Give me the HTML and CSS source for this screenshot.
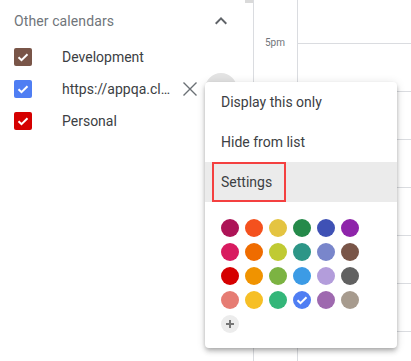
FILE: index.html
```html
<!DOCTYPE html>
<html lang="en">
<head>
  <meta charset="UTF-8">
  <title>Other calendars</title>
  <link rel="stylesheet" href="styles.css">
</head>
<body>

<div class="page">
  <div class="sidebar">
    <div class="scroll-thumb"></div>
    <div class="section-header">
      <span class="section-title">Other calendars</span>
      <span class="icon-btn">
        <svg width="24" height="24" viewBox="0 0 24 24"><path d="M7.41 15.41L12 10.83l4.59 4.58L18 14l-6-6-6 6z" fill="#5f6368"/></svg>
      </span>
    </div>

    <div class="cal-row">
      <span class="checkbox brown">
        <svg width="18" height="18" viewBox="0 0 18 18"><path d="M4.5 9.2l3 3 6-6" fill="none" stroke="#fff" stroke-width="2"/></svg>
      </span>
      <span class="cal-name">Development</span>
    </div>
    <div class="cal-row">
      <span class="checkbox blue">
        <svg width="18" height="18" viewBox="0 0 18 18"><path d="M4.5 9.2l3 3 6-6" fill="none" stroke="#fff" stroke-width="2"/></svg>
      </span>
      <span class="cal-name clip">https://appqa.cl…</span>
      <span class="remove">
        <svg width="24" height="24" viewBox="0 0 24 24"><path d="M5.5 5.5l13 13M18.5 5.5l-13 13" fill="none" stroke="#6b7075" stroke-width="1.4"/></svg>
      </span>
      <span class="hover-circle"></span>
    </div>
    <div class="cal-row">
      <span class="checkbox red">
        <svg width="18" height="18" viewBox="0 0 18 18"><path d="M4.5 9.2l3 3 6-6" fill="none" stroke="#fff" stroke-width="2"/></svg>
      </span>
      <span class="cal-name">Personal</span>
    </div>
  </div>

  <div class="gutter">
    <div class="labels">
      <div class="hour"></div>
      <div class="hour">5pm</div>
      <div class="hour"></div>
      <div class="hour"></div>
      <div class="hour"></div>
      <div class="hour"></div>
      <div class="hour"></div>
      <div class="hour"></div>
    </div>
  </div>

  <div class="day">
    <div class="slot"></div>
    <div class="slot"></div>
    <div class="slot"></div>
    <div class="slot"></div>
    <div class="slot"></div>
    <div class="slot"></div>
    <div class="slot"></div>
  </div>

  <!-- меню календаря поверх сетки -->
  <div class="menu">
    <div class="menu-item">Display this only</div>
    <div class="menu-item">Hide from list</div>
    <div class="menu-item active"><span class="outline">Settings</span></div>
    <div class="swatches">
      <span class="dot" style="background:#ad1457"></span>
      <span class="dot" style="background:#f4511e"></span>
      <span class="dot" style="background:#e4c441"></span>
      <span class="dot" style="background:#258a4a"></span>
      <span class="dot" style="background:#3f51b5"></span>
      <span class="dot" style="background:#8e24aa"></span>

      <span class="dot" style="background:#d81b60"></span>
      <span class="dot" style="background:#ef6c00"></span>
      <span class="dot" style="background:#c0ca33"></span>
      <span class="dot" style="background:#2d9687"></span>
      <span class="dot" style="background:#7986cb"></span>
      <span class="dot" style="background:#795548"></span>

      <span class="dot" style="background:#d50000"></span>
      <span class="dot" style="background:#f09300"></span>
      <span class="dot" style="background:#7cb342"></span>
      <span class="dot" style="background:#3c9be5"></span>
      <span class="dot" style="background:#b39ddb"></span>
      <span class="dot" style="background:#616161"></span>

      <span class="dot" style="background:#e67c73"></span>
      <span class="dot" style="background:#f6bf26"></span>
      <span class="dot" style="background:#33b679"></span>
      <span class="dot" style="background:#4f7ef3">
        <svg width="18" height="18" viewBox="0 0 18 18"><path d="M4.5 9.2l3 3 6-6" fill="none" stroke="#fff" stroke-width="2"/></svg>
      </span>
      <span class="dot" style="background:#9e69af"></span>
      <span class="dot" style="background:#a79b8e"></span>

      <span class="dot add">
        <svg width="18" height="18" viewBox="0 0 18 18"><path d="M9 5v8M5 9h8" fill="none" stroke="#757575" stroke-width="2"/></svg>
      </span>
    </div>
  </div>
</div>

</body>
</html>
```

FILE: styles.css
```css
body {
  margin: 0;
  padding: 0;
  background: #fff;
  font-family: Roboto, "Liberation Sans", Arial, sans-serif;
  color: #3c4043;
  overflow: hidden;
}
.page {
  position: relative;
  display: flex;
  width: 411px;
  height: 361px;
  overflow: hidden;
}
.sidebar {
  position: relative;
  width: 253px;
  flex-shrink: 0;
  border-right: 1px solid #dadce0;
}
.scroll-thumb {
  position: absolute;
  top: 0;
  right: 0;
  width: 8px;
  height: 3px;
  background: #dadada;
}
.section-header {
  height: 41px;
  display: flex;
  align-items: center;
  justify-content: space-between;
  padding: 0 20px 0 14px;
}
.section-title {
  font-size: 14px;
  color: #70757a;
  letter-spacing: 0.1px;
}
.icon-btn {
  width: 24px;
  height: 24px;
  display: flex;
}
.cal-row {
  height: 32px;
  display: flex;
  align-items: center;
  padding-left: 14px;
}
.checkbox {
  width: 18px;
  height: 18px;
  border-radius: 2px;
  display: flex;
  flex-shrink: 0;
}
.checkbox.brown { background: #795548; }
.checkbox.blue { background: #4f7ef3; }
.checkbox.red { background: #d50000; }
.cal-name {
  margin-left: 30px;
  font-size: 14px;
  color: #3c4043;
  white-space: nowrap;
}
.cal-name.clip {
  width: 110px;
}
.remove {
  width: 24px;
  height: 24px;
  margin-left: 6px;
  display: flex;
}
.hover-circle {
  width: 32px;
  height: 32px;
  margin-left: 3px;
  border-radius: 50%;
  background: #e3e3e3;
}
.gutter {
  width: 43px;
  flex-shrink: 0;
  border-right: 1px solid #dadce0;
}
.labels {
  margin-top: -10px;
}
.hour {
  height: 48px;
  font-size: 10px;
  line-height: 10px;
  color: #70757a;
  text-align: right;
  padding-right: 12px;
}
.day {
  flex: 1;
  padding-top: 43px;
}
.slot {
  height: 47px;
  border-top: 1px solid #dadce0;
}
/* всплывающее меню */
.menu {
  position: absolute;
  left: 205px;
  top: 82px;
  width: 192px;
  background: #fff;
  border-radius: 4px;
  box-shadow: 0 4px 5px 0 rgba(0,0,0,.14), 0 1px 10px 0 rgba(0,0,0,.12), 0 2px 4px -1px rgba(0,0,0,.2);
  z-index: 10;
}
.menu-item {
  height: 40px;
  display: flex;
  align-items: center;
  padding-left: 16px;
  font-size: 14px;
  color: #3c4043;
}
.menu-item.active {
  background: #ebebeb;
  padding-left: 7px;
}
.outline {
  height: 36px;
  display: flex;
  align-items: center;
  padding: 0 12px 0 7px;
  border: 2px solid #f44040;
}
.swatches {
  display: grid;
  grid-template-columns: repeat(6, 18px);
  gap: 6px;
  padding: 17px 16px 15px 16px;
}
.dot {
  width: 18px;
  height: 18px;
  border-radius: 50%;
  display: flex;
}
.dot.add {
  background: #ececec;
}
```
